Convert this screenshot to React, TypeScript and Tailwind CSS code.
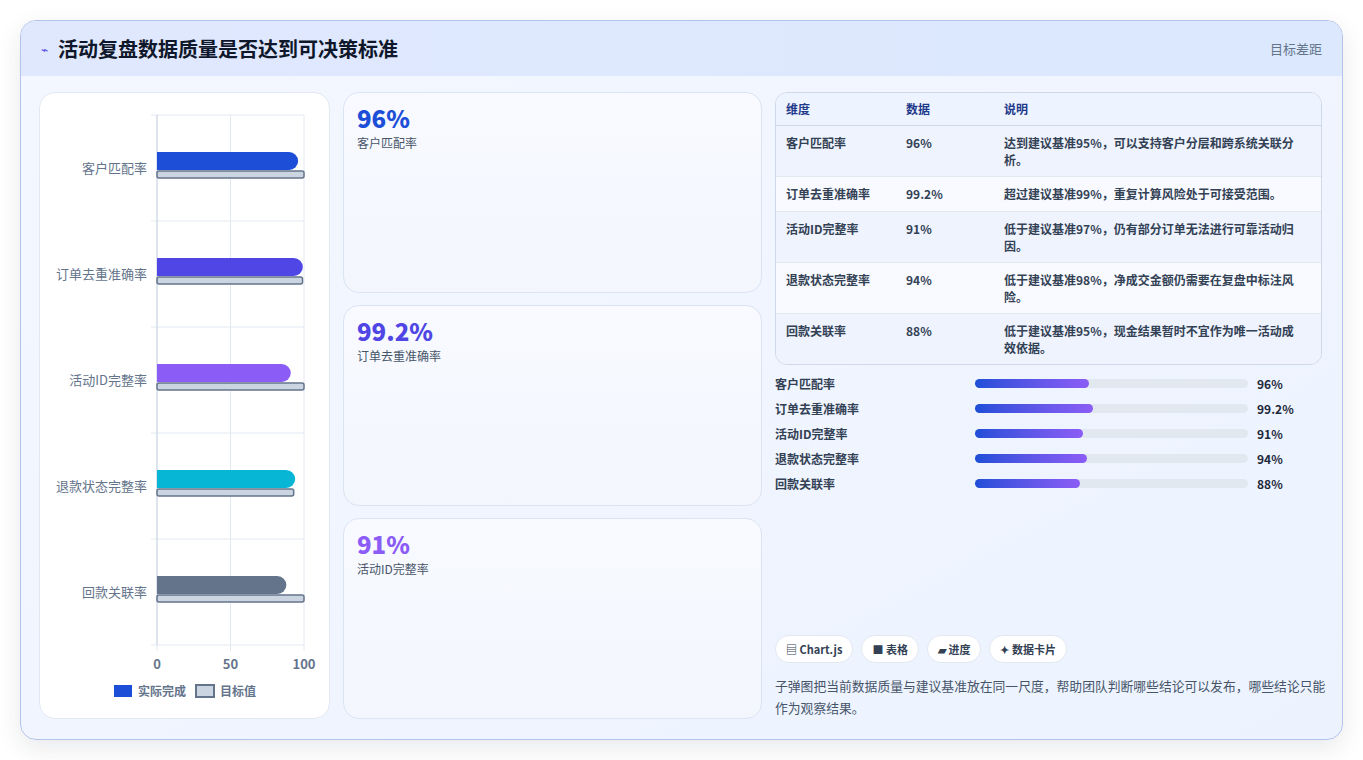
import React from "react";

const font = { fontFamily: '"Noto Sans CJK SC", "Noto Sans", sans-serif' };

const rows = [
  { name: "客户匹配率", v: 96, color: "#1d4ed8", desc: "达到建议基准95%，可以支持客户分层和跨系统关联分析。" },
  { name: "订单去重准确率", v: 99.2, color: "#4f46e5", desc: "超过建议基准99%，重复计算风险处于可接受范围。" },
  { name: "活动ID完整率", v: 91, color: "#8b5cf6", desc: "低于建议基准97%，仍有部分订单无法进行可靠活动归因。" },
  { name: "退款状态完整率", v: 94, color: "#06b6d4", desc: "低于建议基准98%，净成交金额仍需要在复盘中标注风险。" },
  { name: "回款关联率", v: 88, color: "#64748b", desc: "低于建议基准95%，现金结果暂时不宜作为唯一活动成效依据。" },
];
const targets = [100, 99, 100, 93, 100];

function Chart() {
  const x0 = 117, x1 = 264, y0 = 22, y1 = 552;
  const band = (y1 - y0) / 5;
  const sx = (v: number) => x0 + ((x1 - x0) * v) / 100;
  return (
    <svg width="290" height="626" className="block">
      {[0, 50, 100].map((t) => (
        <line key={t} x1={sx(t)} x2={sx(t)} y1={y0} y2={y1 + 6} stroke="#e2e8f0" />
      ))}
      {[0, 1, 2, 3, 4, 5].map((i) => (
        <line key={i} x1={x0 - 6} x2={x1} y1={y0 + band * i} y2={y0 + band * i} stroke="#e2e8f0" />
      ))}
      <line x1={x0} x2={x0} y1={y0} y2={y1} stroke="#cbd5e1" />
      {rows.map((r, i) => {
        const cy = y0 + band * i + band / 2;
        const w = sx(r.v) - x0;
        return (
          <g key={r.name}>
            <text x={x0 - 10} y={cy + 5} textAnchor="end" fontSize="13" fill="#64748b" style={font}>
              {r.name}
            </text>
            <rect x={x0} y={cy + 3} width={sx(targets[i]) - x0} height={7} rx={2} fill="#cbd5e1" stroke="#64748b" strokeWidth="1.5" />
            <path d={`M${x0} ${cy - 16} H${x0 + w - 9} A9 9 0 0 1 ${x0 + w - 9} ${cy + 2} H${x0} Z`} fill={r.color} />
          </g>
        );
      })}
      {[0, 50, 100].map((t) => (
        <text key={t} x={sx(t)} y={576} textAnchor="middle" fontSize="13" fontWeight="600" fill="#64748b" style={font}>
          {t}
        </text>
      ))}
      <rect x={74} y={592} width={18} height={12} fill="#1d4ed8" />
      <text x={98} y={603} fontSize="12" fill="#64748b" fontWeight="600" style={font}>实际完成</text>
      <rect x={156} y={592} width={18} height={12} fill="#cbd5e1" stroke="#64748b" strokeWidth="2" />
      <text x={180} y={603} fontSize="12" fill="#64748b" fontWeight="600" style={font}>目标值</text>
    </svg>
  );
}

function Stat({ v, label, color }: { v: string; label: string; color: string }) {
  return (
    <div className="flex-1 rounded-2xl border border-[#dbe4f3] bg-gradient-to-b from-[#f8faff] to-[#f3f6fd] px-[13px] pt-[9px]">
      <div className="text-[24px] font-extrabold leading-[32px]" style={{ color }}>{v}</div>
      <div className="text-[12px] text-[#475569]">{label}</div>
    </div>
  );
}

export default function App() {
  return (
    <div className="min-h-screen bg-white p-5" style={font}>
      <div className="overflow-hidden rounded-2xl border border-[#b4c3ec] bg-gradient-to-br from-[#f4f7ff] to-[#ecf3ff] shadow-[0_8px_24px_rgba(30,41,59,0.1)]">
        <div className="flex h-[55px] items-center justify-between bg-gradient-to-r from-[#e0e8fe] to-[#dbe8fd] px-5">
          <div className="flex items-center gap-[10px]">
            <span className="text-[12px] text-[#4f46e5]">⌁</span>
            <h1 className="text-[20px] font-bold text-[#0f172a]">活动复盘数据质量是否达到可决策标准</h1>
          </div>
          <span className="text-[13px] text-[#64748b]">目标差距</span>
        </div>
        <div className="flex gap-[13px] pb-5 pl-[18px] pr-5 pt-[16px]">
          <div className="h-[627px] w-[291px] shrink-0 rounded-2xl border border-[#e2e8f0] bg-white">
            <Chart />
          </div>
          <div className="flex w-[419px] shrink-0 flex-col gap-3">
            <Stat v="96%" label="客户匹配率" color="#1d4ed8" />
            <Stat v="99.2%" label="订单去重准确率" color="#4f46e5" />
            <Stat v="91%" label="活动ID完整率" color="#8b5cf6" />
          </div>
          <div className="flex flex-1 flex-col">
            <div className="overflow-hidden rounded-xl border border-[#cfd8e8]">
              <table className="w-full text-left text-[12px] font-semibold text-[#334155]">
                <thead>
                  <tr className="h-[32px] border-b border-[#cfd8e8] bg-[#eef4ff] text-[#1e3a8a]">
                    <th className="w-[130px] pl-[10px] font-semibold">维度</th>
                    <th className="w-[98px] font-semibold">数据</th>
                    <th className="font-semibold">说明</th>
                  </tr>
                </thead>
                <tbody>
                  {rows.map((r, i) => (
                    <tr key={r.name} className={`border-b border-[#e2e8f0] last:border-0 align-top ${i % 2 === 0 ? "bg-[#eef3fd]" : "bg-[#f8faff]"}`}>
                      <td className="py-[8px] pl-[10px]">{r.name}</td>
                      <td className="py-[8px]">{r.v}%</td>
                      <td className="py-[8px] pr-4 leading-[17px]">{r.desc}</td>
                    </tr>
                  ))}
                </tbody>
              </table>
            </div>
            <div className="mt-[10px] flex flex-col gap-[7px]">
              {rows.map((r) => (
                <div key={r.name} className="flex h-[18px] items-center text-[12px] font-semibold text-[#334155]">
                  <span className="w-[200px]">{r.name}</span>
                  <div className="h-[9px] w-[273px] rounded-full bg-[#e2e8f0]">
                    <div className="h-full rounded-full bg-gradient-to-r from-[#1d4ed8] to-[#8b5cf6]" style={{ width: `${r.v * 1.19}px` }} />
                  </div>
                  <span className="ml-[9px] text-[#1e293b]">{r.v}%</span>
                </div>
              ))}
            </div>
            <div className="mt-auto flex gap-2">
              {["▤ Chart.js", "■ 表格", "▰ 进度", "✦ 数据卡片"].map((c) => (
                <span key={c} className="rounded-full border border-[#e2e8f0] bg-white px-[10px] py-[5px] text-[11px] font-semibold text-[#334155]">{c}</span>
              ))}
            </div>
            <p className="mr-[-4px] mt-3 text-[12.8px] leading-[22px] text-[#475569]">
              子弹图把当前数据质量与建议基准放在同一尺度，帮助团队判断哪些结论可以发布，哪些结论只能作为观察结果。
            </p>
          </div>
        </div>
      </div>
    </div>
  );
}
